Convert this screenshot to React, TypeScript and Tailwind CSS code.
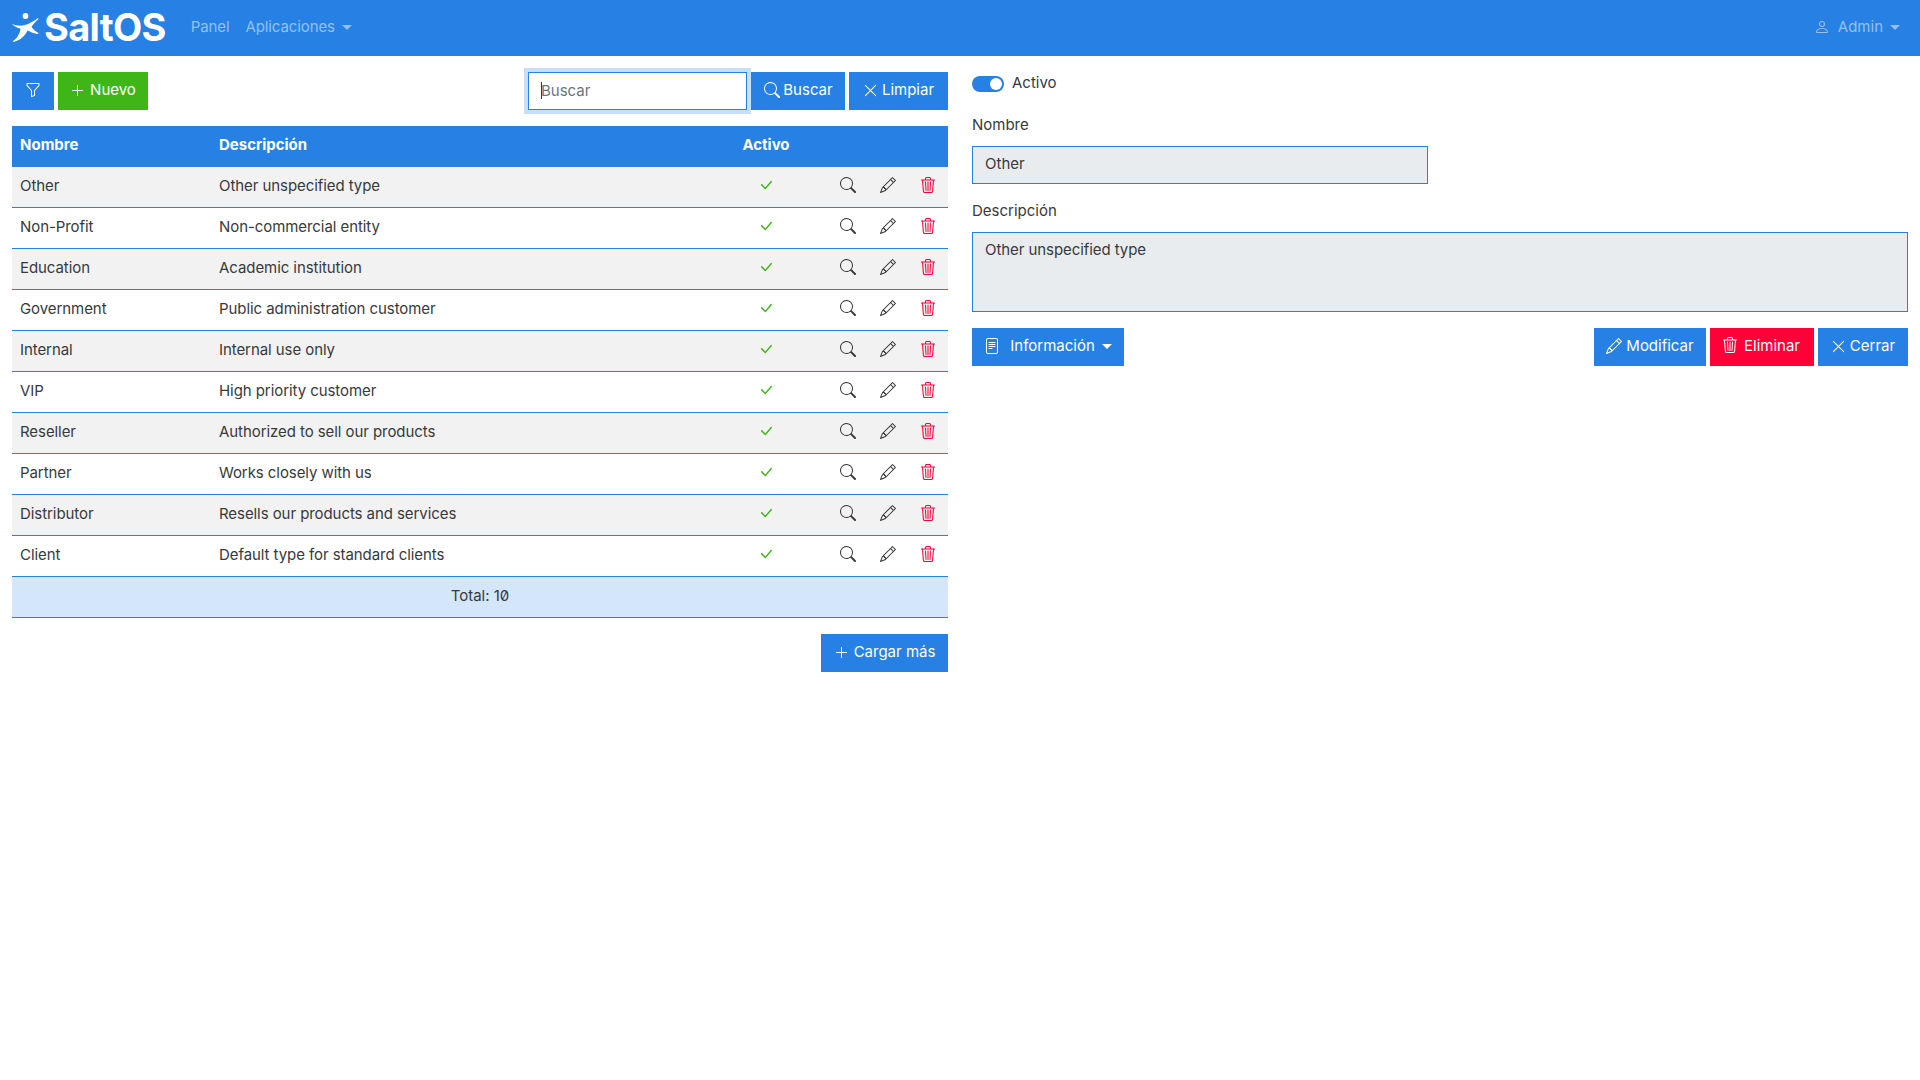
import { BsFunnel, BsPlusLg, BsSearch, BsXLg, BsCheckLg, BsPencil, BsTrash3, BsPerson, BsFileText } from 'react-icons/bs';

const rows = [
    { name: 'Other', description: 'Other unspecified type' },
    { name: 'Non-Profit', description: 'Non-commercial entity' },
    { name: 'Education', description: 'Academic institution' },
    { name: 'Government', description: 'Public administration customer' },
    { name: 'Internal', description: 'Internal use only' },
    { name: 'VIP', description: 'High priority customer' },
    { name: 'Reseller', description: 'Authorized to sell our products' },
    { name: 'Partner', description: 'Works closely with us' },
    { name: 'Distributor', description: 'Resells our products and services' },
    { name: 'Client', description: 'Default type for standard clients' },
];

const btn = 'h-[38px] pb-[2px] flex items-center justify-center text-white text-[15px]';
const blue = 'bg-[#2780e3]';

function Caret() {
    return <span className="inline-block ml-[7px] w-0 h-0 border-t-[5px] border-x-[5px] border-x-transparent border-t-current" />;
}

function Logo() {
    return (
        <div className="flex items-center">
            <svg width="28" height="31" viewBox="0 0 28 31" className="mr-[4px]" fill="white">
                <circle cx="13.500" cy="4" r="2.900" />
                <path d="M0 12 C5 14 9 14 13 13 C18 11.500 22 9 26 6 L26.500 7 C23 10 20.500 13 19.500 15 C21 17 23.500 19.500 26.500 21 L26 22 C22 21.500 18.500 20 15.500 18.500 C13 24 8 28.500 1.500 30 L1 29 C5.500 26 8 21 8.500 16.500 C5.500 16 2.500 14.500 0 12 Z" />
            </svg>
            <span className="text-[38px] leading-none font-bold tracking-[-0.7px] text-white">SaltOS</span>
        </div>
    );
}

export default function App() {
    return (
        <div className="min-h-[1080px] bg-white text-[#373a3c] text-[15px] font-['Inter',sans-serif] [font-feature-settings:'zero']">
            <nav className="h-14 pb-[2px] bg-[#2780e3] flex items-center justify-between pl-3 pr-5">
                <div className="flex items-center gap-[25px]">
                    <Logo />
                    <div className="flex items-center gap-4 text-[#93c0f1] tracking-[-0.1px]">
                        <span>Panel</span>
                        <span className="flex items-center">Aplicaciones<Caret /></span>
                    </div>
                </div>
                <div className="flex items-center text-[#93c0f1]">
                    <BsPerson size={16} className="mr-[8px]" />
                    <span>Admin</span>
                    <Caret />
                </div>
            </nav>

            <main className="grid grid-cols-2 gap-6 px-3 pt-4">
                <section>
                    <div className="flex items-center justify-between h-[38px]">
                        <div className="flex gap-1">
                            <button className={`${btn} ${blue} w-[42px]`}><BsFunnel size={16} /></button>
                            <button className={`${btn} w-[90px] gap-[5px] bg-[#3fb618]`}><BsPlusLg size={15} />Nuevo</button>
                        </div>
                        <div className="flex gap-1">
                            <div className="relative">
                                <input
                                    autoFocus
                                    placeholder="Buscar"
                                    className="block w-[219px] h-[38px] px-3 pb-[2px] border border-[#2780e3] bg-white text-[15px] outline-none shadow-[0_0_0_4px_#c9dff8] placeholder:text-[#6c757d]"
                                />
                                <span className="absolute left-[13px] top-[10px] w-px h-[17px] bg-[#373a3c]" />
                            </div>
                            <button className={`${btn} ${blue} w-[94px] gap-[3px] pl-[1px]`}><BsSearch size={16} />Buscar</button>
                            <button className={`${btn} ${blue} w-[99px] gap-[4px]`}><BsXLg size={15} />Limpiar</button>
                        </div>
                    </div>

                    <table className="w-full mt-4 table-fixed border-separate border-spacing-0">
                        <thead>
                            <tr className="bg-[#2780e3] text-white text-left font-bold">
                                <th className="w-[199px] h-[41px] px-2 pb-[2px]">Nombre</th>
                                <th className="w-[508px] px-2 pb-[2px]">Descripción</th>
                                <th className="w-[94px] px-2 pb-[2px] text-center">Activo</th>
                                <th className="px-2"></th>
                            </tr>
                        </thead>
                        <tbody className="tracking-[-0.07px]">
                            {rows.map((row, index) => (
                                <tr key={row.name} className={index % 2 === 0 ? 'bg-[#f2f2f2]' : 'bg-white'}>
                                    <td className="h-[41px] px-2 pb-[2px] border-b border-[#2780e3]">{row.name}</td>
                                    <td className="px-2 pb-[2px] border-b border-[#2780e3]">{row.description}</td>
                                    <td className="px-2 pb-[4px] border-b border-[#2780e3]"><BsCheckLg size={16} className="mx-auto text-[#3fb618]" /></td>
                                    <td className="px-2 pb-[4px] border-b border-[#2780e3]">
                                        <div className="flex items-center justify-between pl-[19px] pr-[4px]">
                                            <BsSearch size={16} />
                                            <BsPencil size={16} />
                                            <BsTrash3 size={16} className="text-[#ff0039] stroke-current stroke-[0.08px]" />
                                        </div>
                                    </td>
                                </tr>
                            ))}
                        </tbody>
                        <tfoot>
                            <tr className="bg-[#d4e6f9]">
                                <td colSpan={4} className="h-[41px] px-2 pb-[2px] text-center border-b border-[#2780e3]">Total: 10</td>
                            </tr>
                        </tfoot>
                    </table>

                    <div className="flex justify-end mt-4">
                        <button className={`${btn} ${blue} w-[127px] gap-[5px]`}><BsPlusLg size={15} />Cargar más</button>
                    </div>
                </section>

                <section>
                    <div className="flex items-center gap-2 h-[16px] mt-[4px]">
                        <span className="relative w-8 h-4 rounded-full bg-[#2780e3]">
                            <span className="absolute right-[2px] top-[2px] w-3 h-3 rounded-full bg-white" />
                        </span>
                        <span className="pb-[2px]">Activo</span>
                    </div>

                    <label className="block mt-[21px] mb-[9px] leading-[24px]">Nombre</label>
                    <div className="w-[456px] h-[38px] px-3 pb-[2px] flex items-center border border-[#2780e3] bg-[#e9ecef]">Other</div>

                    <label className="block mt-[15px] mb-[9px] leading-[24px]">Descripción</label>
                    <div className="h-[80px] px-3 py-[6px] leading-[22px] border border-[#2780e3] bg-[#e9ecef] tracking-[-0.07px]">Other unspecified type</div>

                    <div className="flex justify-between mt-4">
                        <button className={`${btn} ${blue} w-[152px]`}><BsFileText size={16} className="mr-[10px]" />Información<Caret /></button>
                        <div className="flex gap-1">
                            <button className={`${btn} ${blue} w-[112px] gap-[4px]`}><BsPencil size={16} />Modificar</button>
                            <button className={`${btn} w-[104px] gap-[4px] bg-[#ff0039]`}><BsTrash3 size={16} className="mb-[2px] -ml-[2px] mr-[2px]" />Eliminar</button>
                            <button className={`${btn} ${blue} w-[90px] gap-[4px]`}><BsXLg size={15} />Cerrar</button>
                        </div>
                    </div>
                </section>
            </main>
        </div>
    );
}
